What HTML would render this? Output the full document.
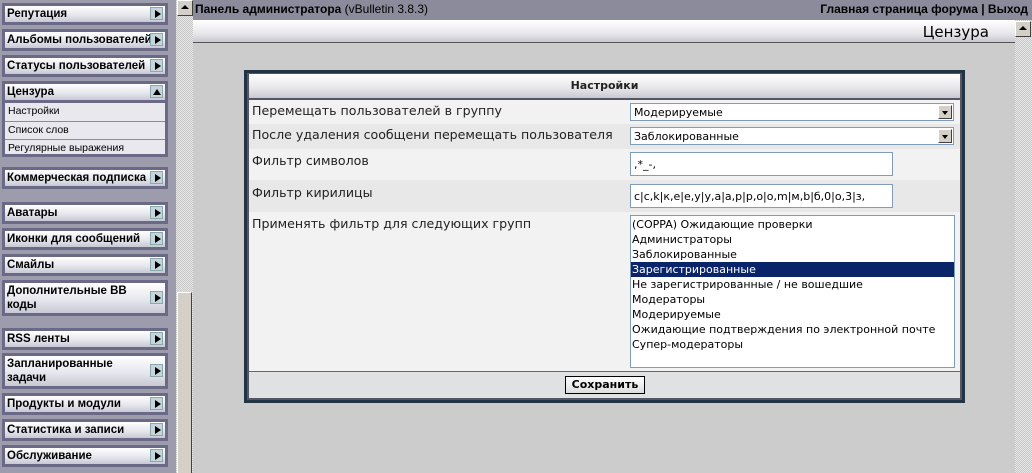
<!DOCTYPE html>
<html><head><meta charset="utf-8"><style>
*{margin:0;padding:0;box-sizing:border-box}
body{width:1032px;height:473px;overflow:hidden;background:#ccc;font-family:"DejaVu Sans","Liberation Sans",sans-serif;position:relative}
.sb{position:absolute;left:0;top:0;width:176px;height:473px;background:#9c9cac}
.it{position:absolute;left:2px;width:166px;border:3px solid #6a6a86;background:linear-gradient(#fff,#e4e4ec 60%,#c8c8d4);font-family:"Liberation Sans",sans-serif;font-weight:bold;font-size:11.5px;color:#000;padding:0 0 0 2px;line-height:16px;white-space:nowrap;overflow:hidden}
.it.two{line-height:14px;padding-top:1px}
.it .a{position:absolute;right:2px;top:50%;margin-top:-7px;width:13px;height:13px;background:#c6d4dc;border:1px solid #8aa;}
.it .a:after{content:"";position:absolute;left:4px;top:2px;border-left:6px solid #000;border-top:4px solid transparent;border-bottom:4px solid transparent}
.it .u:after{left:2px;top:3px;border-left:4px solid transparent;border-right:4px solid transparent;border-bottom:6px solid #000;border-top:0}
.sub{position:absolute;left:2px;width:166px;border:3px solid #6a6a86;border-top:0;background:#e8e8ee;font-size:10.5px;font-family:"Liberation Sans",sans-serif}
.sub div{height:18px;line-height:17px;padding-left:3px;border-top:1px solid #8a8aa0}
.scr{position:absolute;left:176px;top:0;width:17px;height:473px;background:repeating-conic-gradient(#e6e6e6 0 25%,#c8c8c8 0 50%) 0 0/2px 2px}
.thumb{position:absolute;left:177px;top:292px;width:15px;height:181px;background:#d4d0c8;border-left:1px solid #fff;border-top:1px solid #fff;border-right:1px solid #404040}
.btn{position:absolute;width:16px;height:16px;background:#d4d0c8;border:1px solid;border-color:#fff #404040 #404040 #fff}
.btn:after{content:"";position:absolute;left:3px;top:4px;border-left:4px solid transparent;border-right:4px solid transparent;border-bottom:4px solid #000}
.top{position:absolute;left:193px;top:0;width:839px;height:20px;background:#8b8b9b;font-family:"Liberation Sans",sans-serif;font-size:12px;line-height:19px;color:#000}
.hdr{position:absolute;left:193px;top:20px;width:822px;height:23px;background:linear-gradient(#fff,#e8e8ec 60%,#c8c8d0);border-bottom:1px solid #555;font-size:15px;text-align:right;padding-right:26px;line-height:24px}
.tbl{position:absolute;left:244px;top:70px;width:721px;height:333px;border:3px solid #223344;background:#556}
.row{position:absolute;left:2px;width:711px;font-size:12.6px;color:#222;padding-left:3px}
.sel{position:absolute;left:383px;height:18px;width:324px;background:#fff;border:1px solid #7f9db9;font-size:11px;padding:2px 3px}
.sel i{position:absolute;right:1px;top:1px;width:14px;height:14px;background:#d4d0c8;border:1px solid;border-color:#fff #404040 #404040 #fff}
.sel i:after{content:"";position:absolute;left:3px;top:5px;border-left:3px solid transparent;border-right:3px solid transparent;border-top:4px solid #000}
.inp{position:absolute;left:383px;width:263px;height:24px;background:#fff;border:1px solid #7f9db9;font-size:11px;padding:5px 3px}
.lst{position:absolute;left:383px;top:215px;width:325px;height:153px;background:#fff;border:1px solid #7f9db9;font-size:11px;padding-top:1px}
.lst div{height:15px;line-height:15px;padding-left:1px}
</style></head><body>
<div class="sb">
<div class="it" style="top:3px;height:22px">Репутация<span class="a"></span></div>
<div class="it" style="top:29px;height:22px">Альбомы пользователей<span class="a"></span></div>
<div class="it" style="top:55px;height:22px">Статусы пользователей<span class="a"></span></div>
<div class="it" style="top:81px;height:22px">Цензура<span class="a u"></span></div>
<div class="sub" style="top:103px;height:54px"><div style="border-top:0">Настройки</div><div>Список слов</div><div>Регулярные выражения</div></div>
<div class="it" style="top:167px;height:22px">Коммерческая подписка<span class="a"></span></div>
<div class="it" style="top:202px;height:22px">Аватары<span class="a"></span></div>
<div class="it" style="top:228px;height:22px">Иконки для сообщений<span class="a"></span></div>
<div class="it" style="top:254px;height:22px">Смайлы<span class="a"></span></div>
<div class="it two" style="top:280px;height:36px">Дополнительные BB<br>коды<span class="a"></span></div>
<div class="it" style="top:328px;height:22px">RSS ленты<span class="a"></span></div>
<div class="it two" style="top:353px;height:36px">Запланированные<br>задачи<span class="a"></span></div>
<div class="it" style="top:393px;height:22px">Продукты и модули<span class="a"></span></div>
<div class="it" style="top:419px;height:22px">Статистика и записи<span class="a"></span></div>
<div class="it" style="top:445px;height:22px">Обслуживание<span class="a"></span></div>
</div>
<div class="scr"></div><div class="thumb"></div>
<div class="btn" style="left:177px;top:0"></div>
<div class="top"><span style="padding-left:2px"><b>Панель администратора</b> (vBulletin 3.8.3)</span><b style="position:absolute;right:4px">Главная страница форума | Выход</b></div>
<div class="hdr">Цензура</div>
<div class="scr" style="left:1015px;top:20px;height:453px"></div>
<div class="btn" style="left:1015px;top:21px"></div>
<div class="tbl">
<div class="row" style="top:1px;height:24px;background:linear-gradient(#fff,#e6e6ea 60%,#c8c8d0);text-align:center;font-weight:bold;font-size:11px;line-height:24px;padding:0">Настройки</div>
<div class="row" style="top:27px;height:24px;background:#f2f2f2;line-height:22px">Перемещать пользователей в группу</div>
<div class="row" style="top:51px;height:25px;background:#e8e8e8;line-height:22px">После удаления сообщени перемещать пользователя</div>
<div class="row" style="top:76px;height:31px;background:#f2f2f2;line-height:24px">Фильтр символов</div>
<div class="row" style="top:107px;height:32px;background:#e8e8e8;line-height:26px">Фильтр кирилицы</div>
<div class="row" style="top:139px;height:159px;background:#f2f2f2;line-height:24px">Применять фильтр для следующих групп</div>
<div class="row" style="top:298px;height:27px;background:#e0e1e3;border-top:1px solid #667"></div>
<div class="sel" style="top:30px">Модерируемые<i></i></div>
<div class="sel" style="top:54px">Заблокированные<i></i></div>
<div class="inp" style="top:79px">,*_-,</div>
<div class="inp" style="top:111px">c|c,k|к,e|e,y|у,a|a,p|p,o|o,m|м,b|б,0|o,3|з,</div>
<div class="lst" style="top:142px">
<div>(COPPA) Ожидающие проверки</div><div>Администраторы</div><div>Заблокированные</div>
<div style="background:#0a246a;color:#fff">Зарегистрированные</div>
<div>Не зарегистрированные / не вошедшие</div><div>Модераторы</div><div>Модерируемые</div>
<div>Ожидающие подтверждения по электронной почте</div><div>Супер-модераторы</div></div>
<div style="position:absolute;left:318px;top:303px;width:80px;height:18px;border:1px solid #000;background:linear-gradient(#fff,#ddd);font-size:11px;font-weight:bold;text-align:center;line-height:16px">Сохранить</div>
</div>
</body></html>
